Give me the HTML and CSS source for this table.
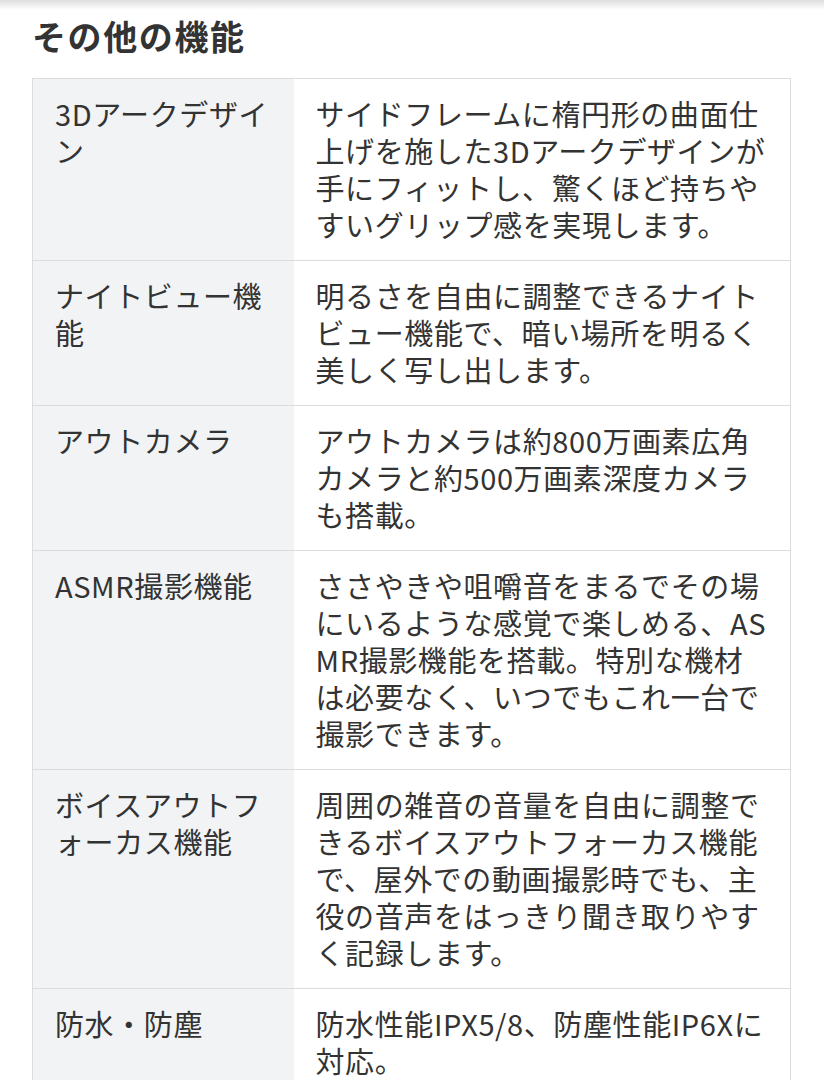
FILE: index.html
```html
<!DOCTYPE html>
<html lang="ja">
  <head>
    <meta charset="UTF-8" />
    <meta name="viewport" content="width=device-width, initial-scale=1.0" />
    <title>その他の機能</title>
    <link rel="stylesheet" href="styles.css">
  </head>

  <body>
    <div class="topbar"></div>
    <div id="wrap">
      <h2 class="title">その他の機能</h2>
      <table class="spec">
        <tr>
          <th>3Dアークデザイン</th>
          <td>サイドフレームに楕円形の曲面仕上げを施した3Dアークデザインが手にフィットし、驚くほど持ちやすいグリップ感を実現します。</td>
        </tr>
        <tr>
          <th>ナイトビュー機能</th>
          <td>明るさを自由に調整できるナイトビュー機能で、暗い場所を明るく美しく写し出します。</td>
        </tr>
        <tr>
          <th>アウトカメラ</th>
          <td>アウトカメラは約800万画素広角カメラと約500万画素深度カメラも搭載。</td>
        </tr>
        <tr>
          <th>ASMR撮影機能</th>
          <td>ささやきや咀嚼音をまるでその場にいるような感覚で楽しめる、ASMR撮影機能を搭載。特別な機材は必要なく、いつでもこれ一台で撮影できます。</td>
        </tr>
        <tr>
          <th>ボイスアウトフォーカス機能</th>
          <td>周囲の雑音の音量を自由に調整できるボイスアウトフォーカス機能で、屋外での動画撮影時でも、主役の音声をはっきり聞き取りやすく記録します。</td>
        </tr>
        <tr>
          <th>防水・防塵</th>
          <td>防水性能IPX5/8、防塵性能IP6Xに対応。</td>
        </tr>
      </table>
    </div>
  </body>
</html>
```

FILE: styles.css
```css
* {
  margin: 0;
  padding: 0;
  box-sizing: border-box;
}

body {
  background: #fff;
  color: #333;
  font-family: "Noto Sans CJK JP", Roboto, sans-serif;
}

.topbar {
  height: 10px;
  background: linear-gradient(#dedede, #fff);
}

#wrap {
  padding: 4px 33px 0 32px;
}

#wrap .title {
  font-size: 34px;
  line-height: 44px;
  font-weight: bold;
  letter-spacing: 1.6px;
  color: #333;
}

#wrap .spec {
  width: 100%;
  margin-top: 20px;
  border-collapse: collapse;
  border: 1px solid #dcdcdc;
  font-size: 29px;
  line-height: 37px;
  letter-spacing: 0.6px;
  line-break: loose;
  word-break: break-all;
}

#wrap .spec th,
#wrap .spec td {
  padding: 16px 22px 17px;
  vertical-align: top;
  text-align: left;
  font-weight: normal;
  border-bottom: 1px solid #dcdcdc;
}

#wrap .spec th {
  width: 261px;
  background: #f2f3f5;
}

#wrap .spec td {
  padding-right: 21px;
  background: #fff;
}
```
